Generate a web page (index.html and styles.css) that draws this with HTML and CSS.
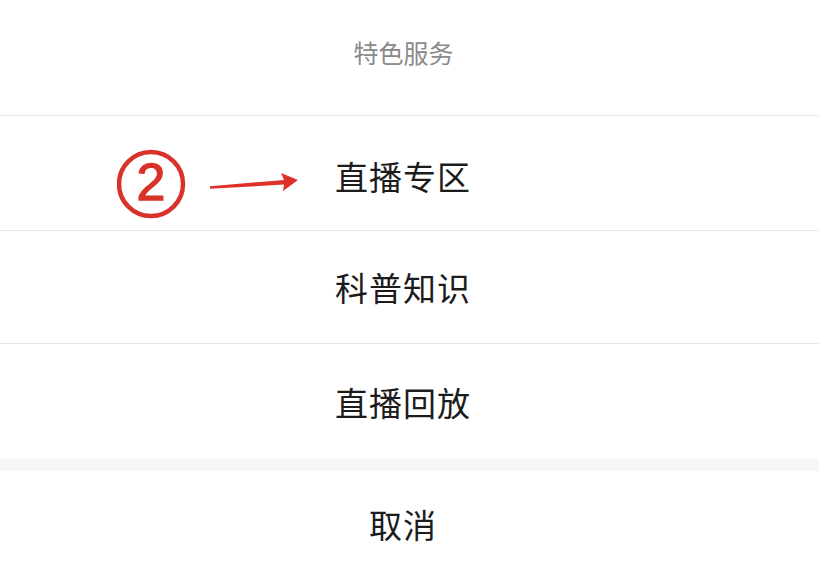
FILE: index.html
```html
<!DOCTYPE html>
<html lang="zh-CN">
<head>
<meta charset="utf-8">
<link rel="stylesheet" href="styles.css">
</head>
<body>
<div class="sheet">
  <div class="title">特色服务</div>
  <div class="item item-first">
    <span class="label">直播专区</span>
    <svg class="annot" width="200" height="80" viewBox="0 0 200 80">
      <circle cx="34" cy="35" r="32" fill="none" stroke="#d8322a" stroke-width="4.5"/>
      <text x="34" y="51" text-anchor="middle" class="annot-num" fill="#d8322a" stroke="#d8322a" stroke-width="1.3">2</text>
      <path d="M93 37.2 L167 31 L164 24 L181 31 L166 42 L167 35.5 L93 39.8 Z" fill="#e0302a"/>
    </svg>
  </div>
  <div class="item">
    <span class="label">科普知识</span>
  </div>
  <div class="item item-last">
    <span class="label">直播回放</span>
  </div>
  <div class="gap"></div>
  <div class="item cancel">
    <span class="label">取消</span>
  </div>
</div>
</body>
</html>
```

FILE: styles.css
```css
html, body {
  margin: 0;
  padding: 0;
  background: #ffffff;
}
body {
  width: 819px;
  height: 575px;
  overflow: hidden;
  font-family: "Noto Sans CJK SC", "Noto Sans", sans-serif;
}
.sheet {
  display: flex;
  flex-direction: column;
}
.title {
  height: 116px;
  display: flex;
  align-items: center;
  justify-content: center;
  padding-right: 12px;
  box-sizing: border-box;
  font-size: 25px;
  color: #8a8a8a;
  border-bottom: 1px solid #e6e6e6;
  padding-bottom: 12px;
}
.item {
  position: relative;
  height: 113px;
  display: flex;
  align-items: center;
  justify-content: center;
  padding-right: 13px;
  box-sizing: border-box;
  border-bottom: 1px solid #e6e6e6;
}
.item-first {
  height: 115px;
  padding-top: 5px;
}
.item-last {
  height: 115px;
  border-bottom: none;
}
.label {
  font-size: 33px;
  color: #1c1c1c;
  letter-spacing: 1px;
}
.gap {
  height: 12px;
  background: #f6f6f6;
}
.cancel {
  height: 103px;
  border-bottom: none;
  padding-top: 2px;
}
.annot {
  position: absolute;
  left: 117px;
  top: 33px;
}
.annot-num {
  font-family: "Liberation Sans", sans-serif;
  font-size: 52px;
  font-weight: normal;
}
```
